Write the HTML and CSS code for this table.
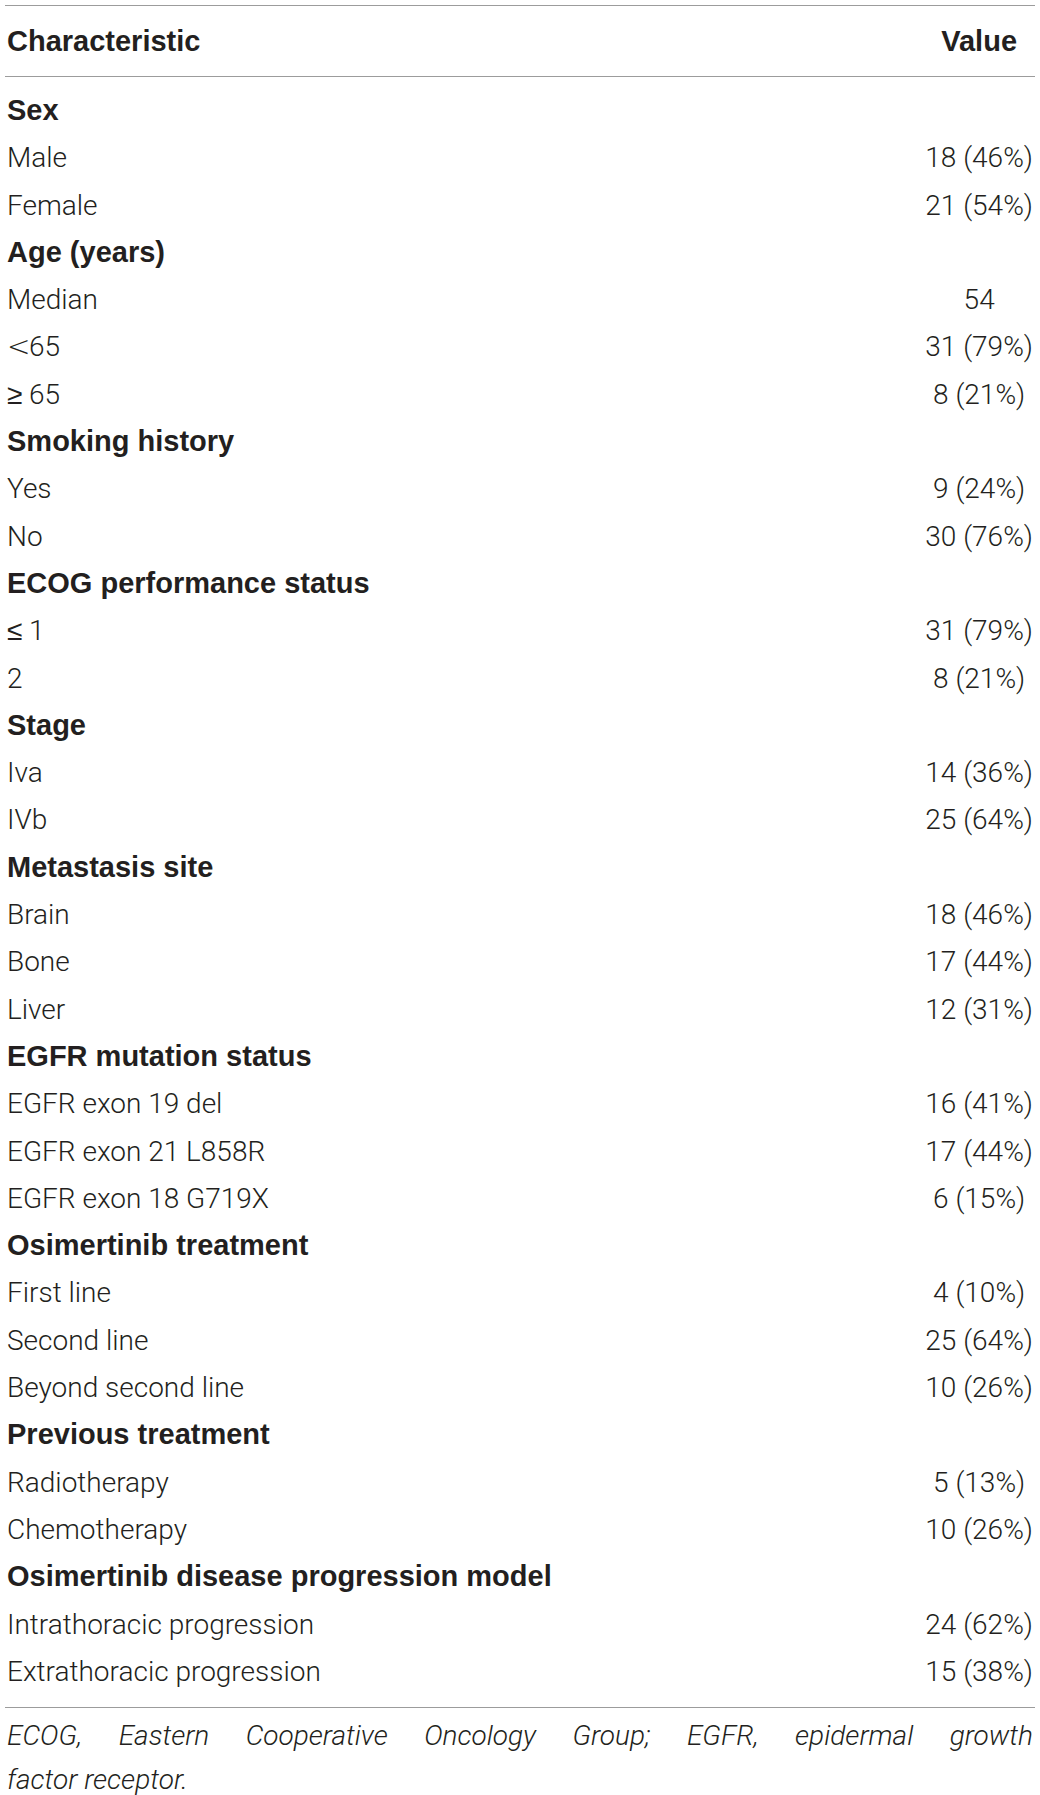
FILE: index.html
```html
<!DOCTYPE html>
<html lang="en">
<head>
  <meta charset="UTF-8" />
  <title>Patient characteristics</title>
  <link rel="stylesheet" href="styles.css">
</head>
<body>
  <div class="page">
    <table class="data">
      <thead>
        <tr>
          <th class="label">Characteristic</th>
          <th class="value">Value</th>
        </tr>
      </thead>
      <tbody>
        <tr class="group first"><td>Sex</td><td></td></tr>
        <tr><td>Male</td><td>18 (46%)</td></tr>
        <tr><td>Female</td><td>21 (54%)</td></tr>
        <tr class="group"><td>Age (years)</td><td></td></tr>
        <tr><td>Median</td><td>54</td></tr>
        <tr><td><span class="sym">&lt;</span>65</td><td>31 (79%)</td></tr>
        <tr><td><span class="sym">&ge;</span>65</td><td>8 (21%)</td></tr>
        <tr class="group"><td>Smoking history</td><td></td></tr>
        <tr><td>Yes</td><td>9 (24%)</td></tr>
        <tr><td>No</td><td>30 (76%)</td></tr>
        <tr class="group"><td>ECOG performance status</td><td></td></tr>
        <tr><td><span class="sym">&le;</span>1</td><td>31 (79%)</td></tr>
        <tr><td>2</td><td>8 (21%)</td></tr>
        <tr class="group"><td>Stage</td><td></td></tr>
        <tr><td>Iva</td><td>14 (36%)</td></tr>
        <tr><td>IVb</td><td>25 (64%)</td></tr>
        <tr class="group"><td>Metastasis site</td><td></td></tr>
        <tr><td>Brain</td><td>18 (46%)</td></tr>
        <tr><td>Bone</td><td>17 (44%)</td></tr>
        <tr><td>Liver</td><td>12 (31%)</td></tr>
        <tr class="group"><td>EGFR mutation status</td><td></td></tr>
        <tr><td>EGFR exon 19 del</td><td>16 (41%)</td></tr>
        <tr><td>EGFR exon 21 L858R</td><td>17 (44%)</td></tr>
        <tr><td>EGFR exon 18 G719X</td><td>6 (15%)</td></tr>
        <tr class="group"><td>Osimertinib treatment</td><td></td></tr>
        <tr><td>First line</td><td>4 (10%)</td></tr>
        <tr><td>Second line</td><td>25 (64%)</td></tr>
        <tr><td>Beyond second line</td><td>10 (26%)</td></tr>
        <tr class="group"><td>Previous treatment</td><td></td></tr>
        <tr><td>Radiotherapy</td><td>5 (13%)</td></tr>
        <tr><td>Chemotherapy</td><td>10 (26%)</td></tr>
        <tr class="group"><td>Osimertinib disease progression model</td><td></td></tr>
        <tr><td>Intrathoracic progression</td><td>24 (62%)</td></tr>
        <tr class="last"><td>Extrathoracic progression</td><td>15 (38%)</td></tr>
      </tbody>
    </table>
    <p class="note"><span class="spread">ECOG, Eastern Cooperative Oncology Group; EGFR, epidermal growth </span>factor receptor.</p>
  </div>
</body>
</html>
```

FILE: styles.css
```css
body {
  margin: 0;
  background: #ffffff;
  color: #231f20;
  font-family: Roboto, 'Liberation Sans', Arial, sans-serif;
}

.page {
  padding: 5px 5px 0;
}

.data {
  width: 100%;
  border-collapse: collapse;
  font-size: 28px;
  font-weight: 300;
}

.data th {
  height: 70px;
  padding: 0 2px;
  font-family: 'Liberation Sans', Arial, sans-serif;
  font-size: 29px;
  font-weight: 700;
  border-top: 1px solid #9c9c9c;
  border-bottom: 1px solid #9c9c9c;
}

.data th.label {
  text-align: left;
}

.data td {
  height: 47.3px;
  padding: 0 2px;
  line-height: 47.3px;
}

.data td:last-child,
.data th.value {
  width: 1%;
  text-align: center;
  white-space: nowrap;
}

.data tr.group td {
  font-family: 'Liberation Sans', Arial, sans-serif;
  font-size: 29px;
  font-weight: 700;
}

.data tr.first td {
  padding-top: 10px;
}

.data tr.last td {
  padding-bottom: 12px;
  border-bottom: 1px solid #9c9c9c;
}

.sym {
  display: inline-block;
  width: 22px;
  font-family: 'DejaVu Sans', sans-serif;
  font-weight: 200;
}

.note {
  margin: 6px 2px 0;
  font-size: 28px;
  font-style: italic;
  font-weight: 300;
  line-height: 44px;
  text-align: justify;
}

.note .spread {
  word-spacing: 24px;
}
```
